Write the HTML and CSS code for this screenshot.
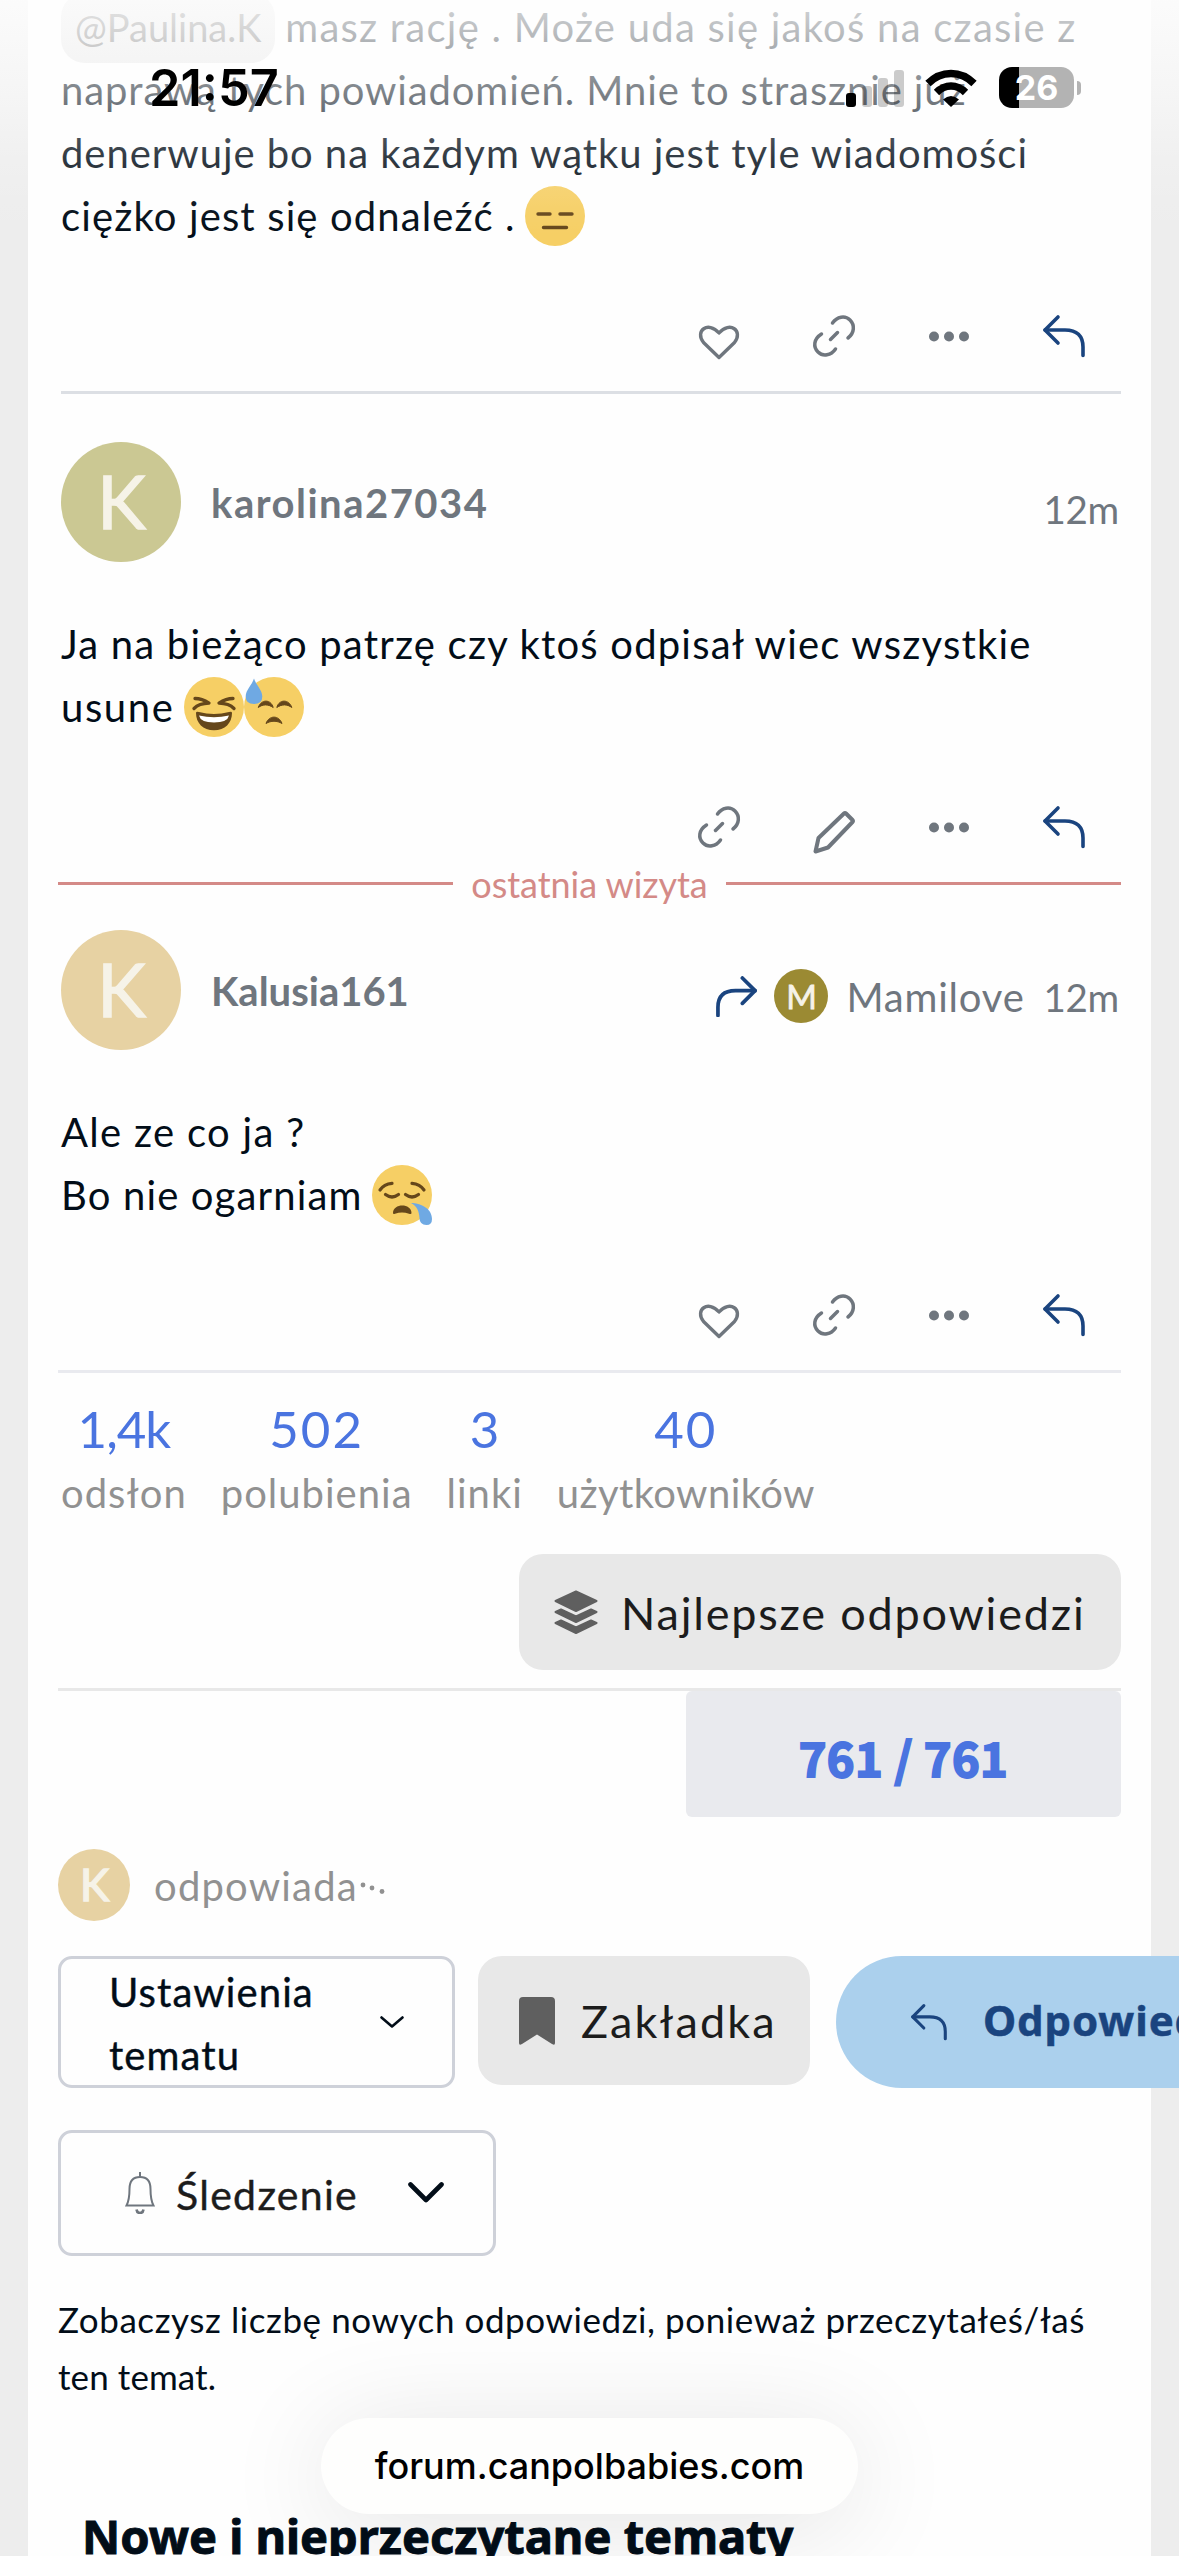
FILE: index.html
```
<!DOCTYPE html>
<html lang="pl">
<head>
<meta charset="utf-8">
<title>forum.canpolbabies.com</title>
<link rel="stylesheet" href="styles.css">
</head>
<body>
<svg class="defs" aria-hidden="true">
  <symbol id="heart" viewBox="0 0 42 42"><path d="M21 42.500 5.500 27.500C-3.500 16 10 5.500 21 18 32 5.500 45.500 16 36.500 27.500Z" fill="none" stroke="currentColor" stroke-width="3.400" stroke-linejoin="round"/></symbol>
  <symbol id="link" viewBox="0 0 42 42"><g fill="none" stroke="currentColor" stroke-width="3.500" stroke-linecap="round"><path d="M19.500 8C24 1.500 32 0 37 5s4.500 13-2 18"/><path d="M22.500 34C18 40.500 10 42 5 37s-4.500-13 3.500-18"/><path d="M17.500 24.500 24.500 17.500"/></g></symbol>
  <symbol id="pencil" viewBox="0 0 42 42"><path d="M2.500 45.500 5.500 32 31 7.500q1-1 2 0l6.500 6.500q1 1 0 2L15 41.500Z" fill="none" stroke="currentColor" stroke-width="4" stroke-linejoin="round"/></symbol>
  <symbol id="dots" viewBox="0 0 42 42"><g fill="currentColor"><circle cx="6" cy="21.500" r="5"/><circle cx="21" cy="21.500" r="5"/><circle cx="36" cy="21.500" r="5"/></g></symbol>
  <symbol id="reply" viewBox="0 0 42 42"><g fill="none" stroke="currentColor" stroke-width="3.600" stroke-linecap="round" stroke-linejoin="round"><path d="M15 2 2 15 15 28"/><path d="M2 15H22Q40 15 40 32V40.500"/></g></symbol>
</svg>

<main class="topic">
  <article class="post">
    <div class="text">
      <p class="w1"><span class="mention">@Paulina.K</span> <span class="rest">masz rację . Może uda się jakoś na czasie z</span></p>
      <p class="w2">naprawą tych powiadomień. Mnie to strasznie już</p>
      <p class="w3">denerwuje bo na każdym wątku jest tyle wiadomości</p>
      <p class="w4">ciężko jest się odnaleźć . <svg class="emoji" viewBox="0 0 60 60"><circle cx="30" cy="30" r="30" fill="#f6cf65"/><path d="M13 28H25M35 28H47M18.500 41.500H41.500" stroke="#65471b" stroke-width="3.400" stroke-linecap="round"/></svg></p>
    </div>
    <div class="actions">
      <svg class="icon"><use href="#heart"/></svg><svg class="icon"><use href="#link"/></svg><svg class="icon"><use href="#dots"/></svg><svg class="icon blue"><use href="#reply"/></svg>
    </div>
  </article>
  <hr>

  <article class="post second">
    <header>
      <span class="avatar olive">K</span><span class="name wide">karolina27034</span>
      <div class="meta"><span class="time">12m</span></div>
    </header>
    <div class="text">
      <p class="w5">Ja na bieżąco patrzę czy ktoś odpisał wiec wszystkie</p>
      <p class="w6">usune <svg class="emoji" viewBox="0 0 60 60"><circle cx="30" cy="30" r="30" fill="#f6cf65"/><path d="M11 21.500Q18 21.500 25 26.200 15 26.500 10 31.500M49 21.500Q42 21.500 35 26.200 45 26.500 50 31.500" fill="none" stroke="#65471b" stroke-width="3.300" stroke-linecap="round" stroke-linejoin="round"/><path d="M12 36Q12 34 15 35 30 39 45 35 48 34 48 36C48 46 41 53.300 30 53.300S12 46 12 36Z" fill="#65471b"/><path d="M15 38.500Q30 42 45 38.500 43.500 45.500 30 45.500T15 38.500Z" fill="#fff"/></svg><svg class="emoji" viewBox="0 0 60 60"><circle cx="30" cy="30" r="30" fill="#f6cf65"/><path d="M14.300 30.500C17 22 27 22 29.200 30.500 24 27 19 27 14.300 30.500ZM32.800 30.500C35 22 45 22 47.800 30.500 43 27 38 27 32.800 30.500ZM22 46.500C25 38 35 38 38 46.500 33 43.500 27 43.500 22 46.500Z" fill="#65471b" stroke="#65471b"/><path d="M10 1.500C12 8 18.300 13 18.300 19.500Q18.300 27 10 27T1.700 19.500C1.700 13 8 8 10 1.500Z" fill="#6fa9e3"/></svg></p>
    </div>
    <div class="actions">
      <svg class="icon"><use href="#link"/></svg><svg class="icon"><use href="#pencil"/></svg><svg class="icon"><use href="#dots"/></svg><svg class="icon blue"><use href="#reply"/></svg>
    </div>
  </article>

  <div class="last-visit"><span>ostatnia wizyta</span></div>

  <article class="post third">
    <header>
      <span class="avatar sand">K</span><span class="name">Kalusia161</span>
      <div class="meta"><svg class="forward blue" viewBox="0 0 42 42"><g fill="none" stroke="currentColor" stroke-width="3.800" stroke-linecap="round" stroke-linejoin="round"><path d="M27 2 40 15 27 28"/><path d="M40 15H20Q2 15 2 32V40.500"/></g></svg><span class="avatar mini">M</span><span class="to">Mamilove</span><span class="time">12m</span></div>
    </header>
    <div class="text">
      <p class="w7">Ale ze co ja ?</p>
      <p class="w8">Bo nie ogarniam <svg class="emoji" viewBox="0 0 60 60"><circle cx="30" cy="30" r="30" fill="#f6cf65"/><g fill="none" stroke="#65471b" stroke-width="3.200" stroke-linecap="round"><path d="M8 25Q12 19 20 18.300M52 25Q48 19 40 18.300M13.500 29.500Q20 34.500 26.500 29.500M33.500 29.500Q40 34.500 46.500 29.500"/></g><path d="M21 48C21 38 39.500 38 39.500 48Q39.500 49.500 37 48.700 30 46.500 23 48.700 21 49.500 21 48Z" fill="#65471b"/><path d="M39 38C48 38 60 43 60 54Q60 60 54.500 60C50 60 47.500 57 47.500 53 47 46 45 41 39 38Z" fill="#6fa9e3"/></svg></p>
    </div>
    <div class="actions">
      <svg class="icon"><use href="#heart"/></svg><svg class="icon"><use href="#link"/></svg><svg class="icon"><use href="#dots"/></svg><svg class="icon blue"><use href="#reply"/></svg>
    </div>
  </article>

  <section class="stats">
    <div><b class="tight">1,4k</b><span>odsłon</span></div>
    <div><b class="loose">502</b><span>polubienia</span></div>
    <div><b>3</b><span>linki</span></div>
    <div><b class="loose">40</b><span>użytkowników</span></div>
  </section>

  <div class="best-row">
    <button class="grey best"><svg width="44" height="44" viewBox="0 0 44 44" fill="#5f5f5f" stroke="#5f5f5f" stroke-width="2" stroke-linejoin="round"><path d="M22 1.500 42.500 11 22 21 1.500 11Z"/><path d="M1.500 22 7 19.500 22 26.500 37 19.500 42.500 22 22 32Z"/><path d="M1.500 33 7 30.500 22 37.500 37 30.500 42.500 33 22 43Z"/></svg><span>Najlepsze odpowiedzi</span></button>
  </div>

  <div class="progress-row"><div class="progress">761 / 761</div></div>

  <div class="typing"><span class="avatar sand small">K</span><span class="who">odpowiada</span><svg width="30" height="24" viewBox="0 0 30 24" fill="#919191"><circle cx="5" cy="12" r="2.400"/><circle cx="14" cy="15" r="2.400"/><circle cx="24" cy="18.500" r="2.400"/></svg></div>

  <div class="toolbar">
    <button class="outline settings"><span>Ustawienia tematu</span><svg width="24" height="12" viewBox="0 0 24 12"><path d="M1.500 1.500 12 10.500 22.500 1.500" fill="none" stroke="#020d18" stroke-width="2.600" stroke-linecap="round" stroke-linejoin="round"/></svg></button>
    <button class="grey bookmark"><svg width="36" height="48" viewBox="0 0 36 48"><path d="M4 0H32Q36 0 36 4V46Q36 49 33 47L18 37.500 3 47Q0 49 0 46V4Q0 0 4 0Z" fill="#5f5f5f"/></svg><span>Zakładka</span></button>
    <button class="answer"><svg class="answer-icon"  viewBox="0 0 42 42"><use href="#reply" width="42" height="42"/></svg><span>Odpowiedz</span></button>
  </div>

  <button class="outline follow"><svg width="30" height="42" viewBox="0 0 30 42"><g fill="none" stroke="#6f767e" stroke-width="2"><path d="M1.500 33.500Q4.500 28 4.500 17 4.500 5 15 5T25.500 17Q25.500 28 28.500 33.500Z"/><path d="M15 5V0"/><path d="M11.500 37.500Q12 41 15 41T18.500 37.500" stroke-width="2.600"/></g></svg><span>Śledzenie</span><svg width="36" height="22" viewBox="0 0 36 22"><path d="M2.500 2.500 18 18 33.500 2.500" fill="none" stroke="#020d18" stroke-width="4.600" stroke-linecap="round" stroke-linejoin="round"/></svg></button>

  <p class="note">Zobaczysz liczbę nowych odpowiedzi, ponieważ przeczytałeś/łaś<br><span>ten temat.</span></p>
  <h2>Nowe i nieprzeczytane tematy</h2>
</main>

<div class="fade"></div>
<div class="clock">21:57</div>
<div class="status">
  <svg width="58" height="38" viewBox="0 0 58 38"><rect x="0" y="24" width="10" height="14" rx="3"/><g fill-opacity=".2"><rect x="16" y="17" width="10" height="21" rx="3"/><rect x="32" y="9" width="10" height="29" rx="3"/><rect x="48" y="1" width="10" height="37" rx="3"/></g></svg>
  <svg class="wifi" width="52" height="38" viewBox="0 0 52 38"><g fill="none" stroke="#000" stroke-width="7.500"><path d="M3 14.500Q13 4.500 26 4.500T49 14.500"/><path d="M11.500 23.500Q18 17 26 17T40.500 23.500"/></g><path d="M18 30.500Q26 23.500 34 30.500L26 38Z"/></svg>
  <div class="battery">26</div><i class="cap"></i>
</div>
<div class="address">forum.canpolbabies.com</div>
</body>
</html>
```
FILE: styles.css
```
* { box-sizing: border-box; margin: 0; padding: 0; }
html, body { width: 1179px; height: 2556px; overflow: hidden; }
body { position: relative; background: #ededed; color: #020d18; font: 400 40px/63px Lato, "Noto Sans", sans-serif; padding: 0 28px; }
button { font: inherit; color: inherit; border: 0; }
.defs { position: absolute; width: 0; height: 0; }
symbol { overflow: visible; }

.topic { display: flex; flex-direction: column; background: #fefefe; height: 2556px; padding: 0 30px; white-space: nowrap; }
.topic > * { flex: none; }
.topic > :first-child { margin-top: -6px; }
hr { height: 3px; margin-left: 3px; border: 0; background: #dcdfe4; }

.post { padding-left: 3px; }
.second { padding-top: 48px; }
.third { padding-top: 45px; border-bottom: 3px solid #e9eaef; }
.text p { height: 63px; line-height: 66px; }
.mention { display: inline-block; width: 214px; height: 70px; margin-top: -1px; padding: 0 14px; vertical-align: top; border-radius: 24px; background: #e6e6e6; color: #646464; font-size: 38px; line-height: 68px; letter-spacing: 0; }
.w1 .rest { margin-left: 0; letter-spacing: 1.24px; }
.w2 { letter-spacing: .88px; }
.w3 { letter-spacing: .95px; }
.w4 { letter-spacing: 1.13px; }
.w5 { letter-spacing: 1.2px; }
.w6 { letter-spacing: 1.6px; }
.w7 { letter-spacing: 1.3px; }
.w8 { letter-spacing: 1.15px; }
.emoji { width: 60px; height: 60px; margin-left: -2px; margin-right: 2px; vertical-align: -15px; overflow: visible; }

.actions { display: flex; justify-content: flex-end; gap: 73px; padding: 69px 36px 34px 0; color: #6f767e; }
.icon { width: 42px; height: 42px; overflow: visible; }
.blue { color: #1a447f; }

header { display: flex; align-items: center; height: 120px; margin-bottom: 49px; color: #6f767e; }
.avatar { display: flex; align-items: center; justify-content: center; width: 120px; height: 120px; border-radius: 50%; color: #f6f3e8; font-size: 73px; line-height: 1; padding: 0 0 2px 1px; -webkit-text-stroke: 1.5px #f6f3e8; }
.olive { background: #cbc893; }
.sand { background: #e7d2a3; }
.name { margin-left: 30px; padding-top: 2px; font-weight: 700; }
.wide { letter-spacing: 1.5px; }
.meta { display: flex; align-items: center; margin: 12px 0 0 auto; }
.time { font-size: 38.5px; padding: 2px 2px 0 0; letter-spacing: -.3px; }
.forward { width: 41px; height: 41px; margin-right: 17px; }
.mini { width: 54px; height: 54px; font-size: 33px; background: #9b8a33; padding: 0; -webkit-text-stroke: .8px #f6f3e8; }
.to { margin: 0 19px 0 18px; padding-top: 2px; letter-spacing: .8px; }

.last-visit { display: flex; align-items: center; justify-content: space-between; height: 3px; font-size: 36px; line-height: 50px; letter-spacing: -.05px; color: #d48a87; }
.last-visit::before, .last-visit::after { content: ""; width: 395px; height: 3px; background: #d48a87; }

.stats { display: flex; gap: 34px; padding: 24px 0 0 3px; text-align: center; }
.stats b { display: block; font-weight: 400; font-size: 51px; line-height: 64px; color: #4a74e0; }
.stats .tight { letter-spacing: -1px; }
.stats .loose { letter-spacing: 2px; }
.stats span { display: block; line-height: 64px; height: 62px; color: #919191; letter-spacing: 1px; }
.stats div:last-child span { letter-spacing: .4px; }

.grey { display: flex; align-items: center; background: #e8e8e8; color: #1c1c1c; border-radius: 24px; font-size: 45px; }
.grey span { padding-top: 2px; }
.best-row { display: flex; justify-content: flex-end; margin-top: 31px; padding-bottom: 18px; border-bottom: 3px solid #e8e8e8; }
.best { width: 602px; height: 116px; padding-left: 35px; gap: 23px; letter-spacing: 1.8px; }
.progress-row { display: flex; justify-content: flex-end; }
.progress { width: 435px; height: 126px; padding-top: 3px; border-radius: 6px; background: #e9eaee; color: #4a74e0; font: 700 47px/126px "Noto Sans CJK JP", sans-serif; text-align: center; letter-spacing: .4px; -webkit-text-stroke: 2px #4a74e0; }

.typing { display: flex; align-items: center; margin-top: 32px; height: 72px; color: #919191; }
.small { width: 72px; height: 72px; font-size: 44px; padding: 0 0 2px 1px; }
.who { margin-left: 24px; padding-top: 3px; letter-spacing: 1.2px; }

.toolbar { display: flex; margin-top: 35px; }
.outline { display: flex; align-items: center; border: 3px solid #ced1d9; border-radius: 14px; background: #fefefe; }
.settings { flex: none; width: 397px; height: 132px; padding: 0 48px; justify-content: space-between; white-space: normal; text-align: left; letter-spacing: 1.1px; -webkit-text-stroke: .4px #020d18; }
.settings span { width: 215px; padding-top: 3px; }
.bookmark { flex: none; width: 332px; height: 129px; margin-left: 23px; padding-left: 41px; gap: 26px; letter-spacing: 2.1px; }
.answer { flex: none; display: flex; align-items: center; width: 420px; height: 132px; margin-left: 26px; padding-left: 75px; border-radius: 66px; background: #abd0ed; color: #1a447f; font: 700 42px/60px "Noto Sans", sans-serif; }
.answer-icon { width: 36px; height: 36px; margin-right: 36px; overflow: visible; }
.answer span { padding-bottom: 4px; letter-spacing: .9px; -webkit-text-stroke: .5px #1a447f; }

.follow { width: 438px; height: 126px; margin-top: 42px; padding-left: 64px; font-size: 41px; letter-spacing: 1.3px; color: #1c1c1c; -webkit-text-stroke: .4px #1c1c1c; }
.follow span { width: 232px; margin-left: 21px; padding-top: 2px; text-align: left; }
.note { margin-top: 34px; padding-top: 1px; height: 114px; font-size: 35px; line-height: 57px; letter-spacing: .57px; }
.note span { letter-spacing: .1px; }
h2 { margin: 102px 0 0 24px; font: 700 47px/60px "Noto Sans", sans-serif; -webkit-text-stroke: 1px #020d18; }

.fade { position: absolute; left: 0; top: 0; width: 1179px; height: 235px; background: linear-gradient(rgba(254,254,254,.84), rgba(254,254,254,.74) 12%, rgba(254,254,254,.5) 38%, rgba(254,254,254,.19) 67%, rgba(254,254,254,.05) 88%, rgba(254,254,254,0)); }
.clock { position: absolute; left: 149px; top: 58px; font: 600 50.5px/60px Inter, sans-serif; color: #000; }
.status { position: absolute; left: 846px; top: 67px; display: flex; align-items: center; height: 41px; }
.wifi { margin-left: 21px; }
.battery { width: 75px; height: 41px; margin-left: 22px; border-radius: 13px; background: linear-gradient(90deg, #000 20px, #b3b3b3 20px); color: #fff; font: 700 34px/41px Inter, sans-serif; text-align: center; }
.cap { width: 4px; height: 14px; margin-left: 3px; border-radius: 0 4px 4px 0; background: #b3b3b3; }
.address { position: absolute; left: 321px; top: 2418px; width: 537px; height: 96px; border-radius: 48px; background: #fefefd; box-shadow: 0 12px 110px rgba(0,0,0,.11); color: #000; font: 500 36px/96px Inter, sans-serif; text-align: center; }
```
